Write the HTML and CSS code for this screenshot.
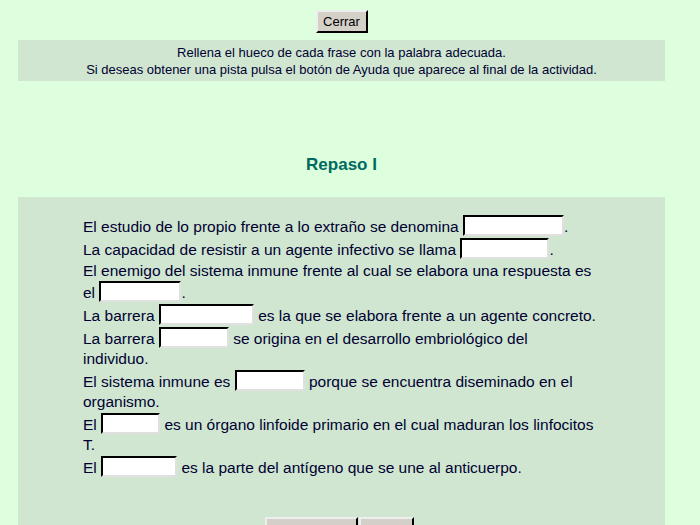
FILE: index.html
```html
<!DOCTYPE html>
<html lang="es">
<head>
<meta charset="utf-8">
<title>Repaso I</title>
<link rel="stylesheet" href="styles.css">
</head>
<body>
<div class="page">
  <div class="top">
    <button class="btn cerrar" type="button">Cerrar</button>
  </div>
  <div class="instr">
    Rellena el hueco de cada frase con la palabra adecuada.<br>
    Si deseas obtener una pista pulsa el botón de Ayuda que aparece al final de la actividad.
  </div>
  <h1 class="title">Repaso I</h1>
  <div class="main">
    <div class="sentences">
      <div class="s">El estudio de lo propio frente a lo extraño se denomina <input class="gap w100" type="text">.</div>
      <div class="s">La capacidad de resistir a un agente infectivo se llama <input class="gap w89" type="text">.</div>
      <div class="s">El enemigo del sistema inmune frente al cual se elabora una respuesta es el <input class="gap w82" type="text">.</div>
      <div class="s">La barrera <input class="gap w95" type="text"> es la que se elabora frente a un agente concreto.</div>
      <div class="s">La barrera <input class="gap w70" type="text"> se origina en el desarrollo embriológico del individuo.</div>
      <div class="s">El sistema inmune es <input class="gap w70" type="text"> porque se encuentra diseminado en el organismo.</div>
      <div class="s">El <input class="gap w58" type="text"> es un órgano linfoide primario en el cual maduran los linfocitos T.</div>
      <div class="s">El <input class="gap w76" type="text"> es la parte del antígeno que se une al anticuerpo.</div>
    </div>
    <div class="actions">
      <button class="btn b1" type="button">Comprobar</button><button class="btn b2" type="button">Ayuda</button>
    </div>
  </div>
</div>
</body>
</html>
```
FILE: styles.css
```css
html, body {
  margin: 0;
  padding: 0;
  background: #ddffdd;
  font-family: "Liberation Sans", Arial, sans-serif;
  overflow: hidden;
}
.page {
  margin-left: 18px;
  width: 647px;
}
.top {
  display: flex;
  justify-content: center;
  padding-top: 10px;
}
.btn {
  font-family: "Liberation Sans", Arial, sans-serif;
  font-size: 12px;
  color: #000;
  background: #d4d0c8;
  border: 2px outset #eeeeee;
  border-right-color: #404040;
  border-bottom-color: #404040;
  padding: 0;
  margin: 0;
}
.cerrar {
  width: 52px;
  height: 23px;
  font-size: 13px;
}
.instr {
  margin-top: 7px;
  height: 41px;
  box-sizing: border-box;
  padding-top: 4px;
  background: #d0e6d0;
  color: #000033;
  font-size: 13px;
  line-height: 17px;
  text-align: center;
}
.title {
  margin: 74px 0 0 0;
  text-align: center;
  font-size: 17px;
  font-weight: bold;
  color: #006a60;
  line-height: 20px;
}
.main {
  margin-top: 22px;
  background: #d0e6d0;
  padding: 18px 69px 0 65px;
  height: 400px;
}
.sentences {
  color: #000033;
  font-size: 15.5px;
  line-height: 20px;
}
.s {
  margin-bottom: 1px;
}
.gap {
  height: 21px;
  box-sizing: border-box;
  border: 2px inset #e0e0e0;
  border-top-color: #404040;
  border-left-color: #404040;
  background: #fff;
  padding: 0;
  margin: 0 0 -1px 0;
  vertical-align: text-bottom;
  font-size: 13px;
}
.w100 { width: 101px; }
.w89 { width: 89px; }
.w82 { width: 82px; }
.w95 { width: 95px; }
.w70 { width: 70px; }
.w58 { width: 59px; }
.w76 { width: 76px; }
.actions {
  display: flex;
  justify-content: center;
  margin-top: 39px;
}
.b1, .b2 {
  height: 26px;
  padding-top: 10px;
}
.b1 { width: 93px; margin-right: 1px; }
.b2 { width: 55px; }
```
